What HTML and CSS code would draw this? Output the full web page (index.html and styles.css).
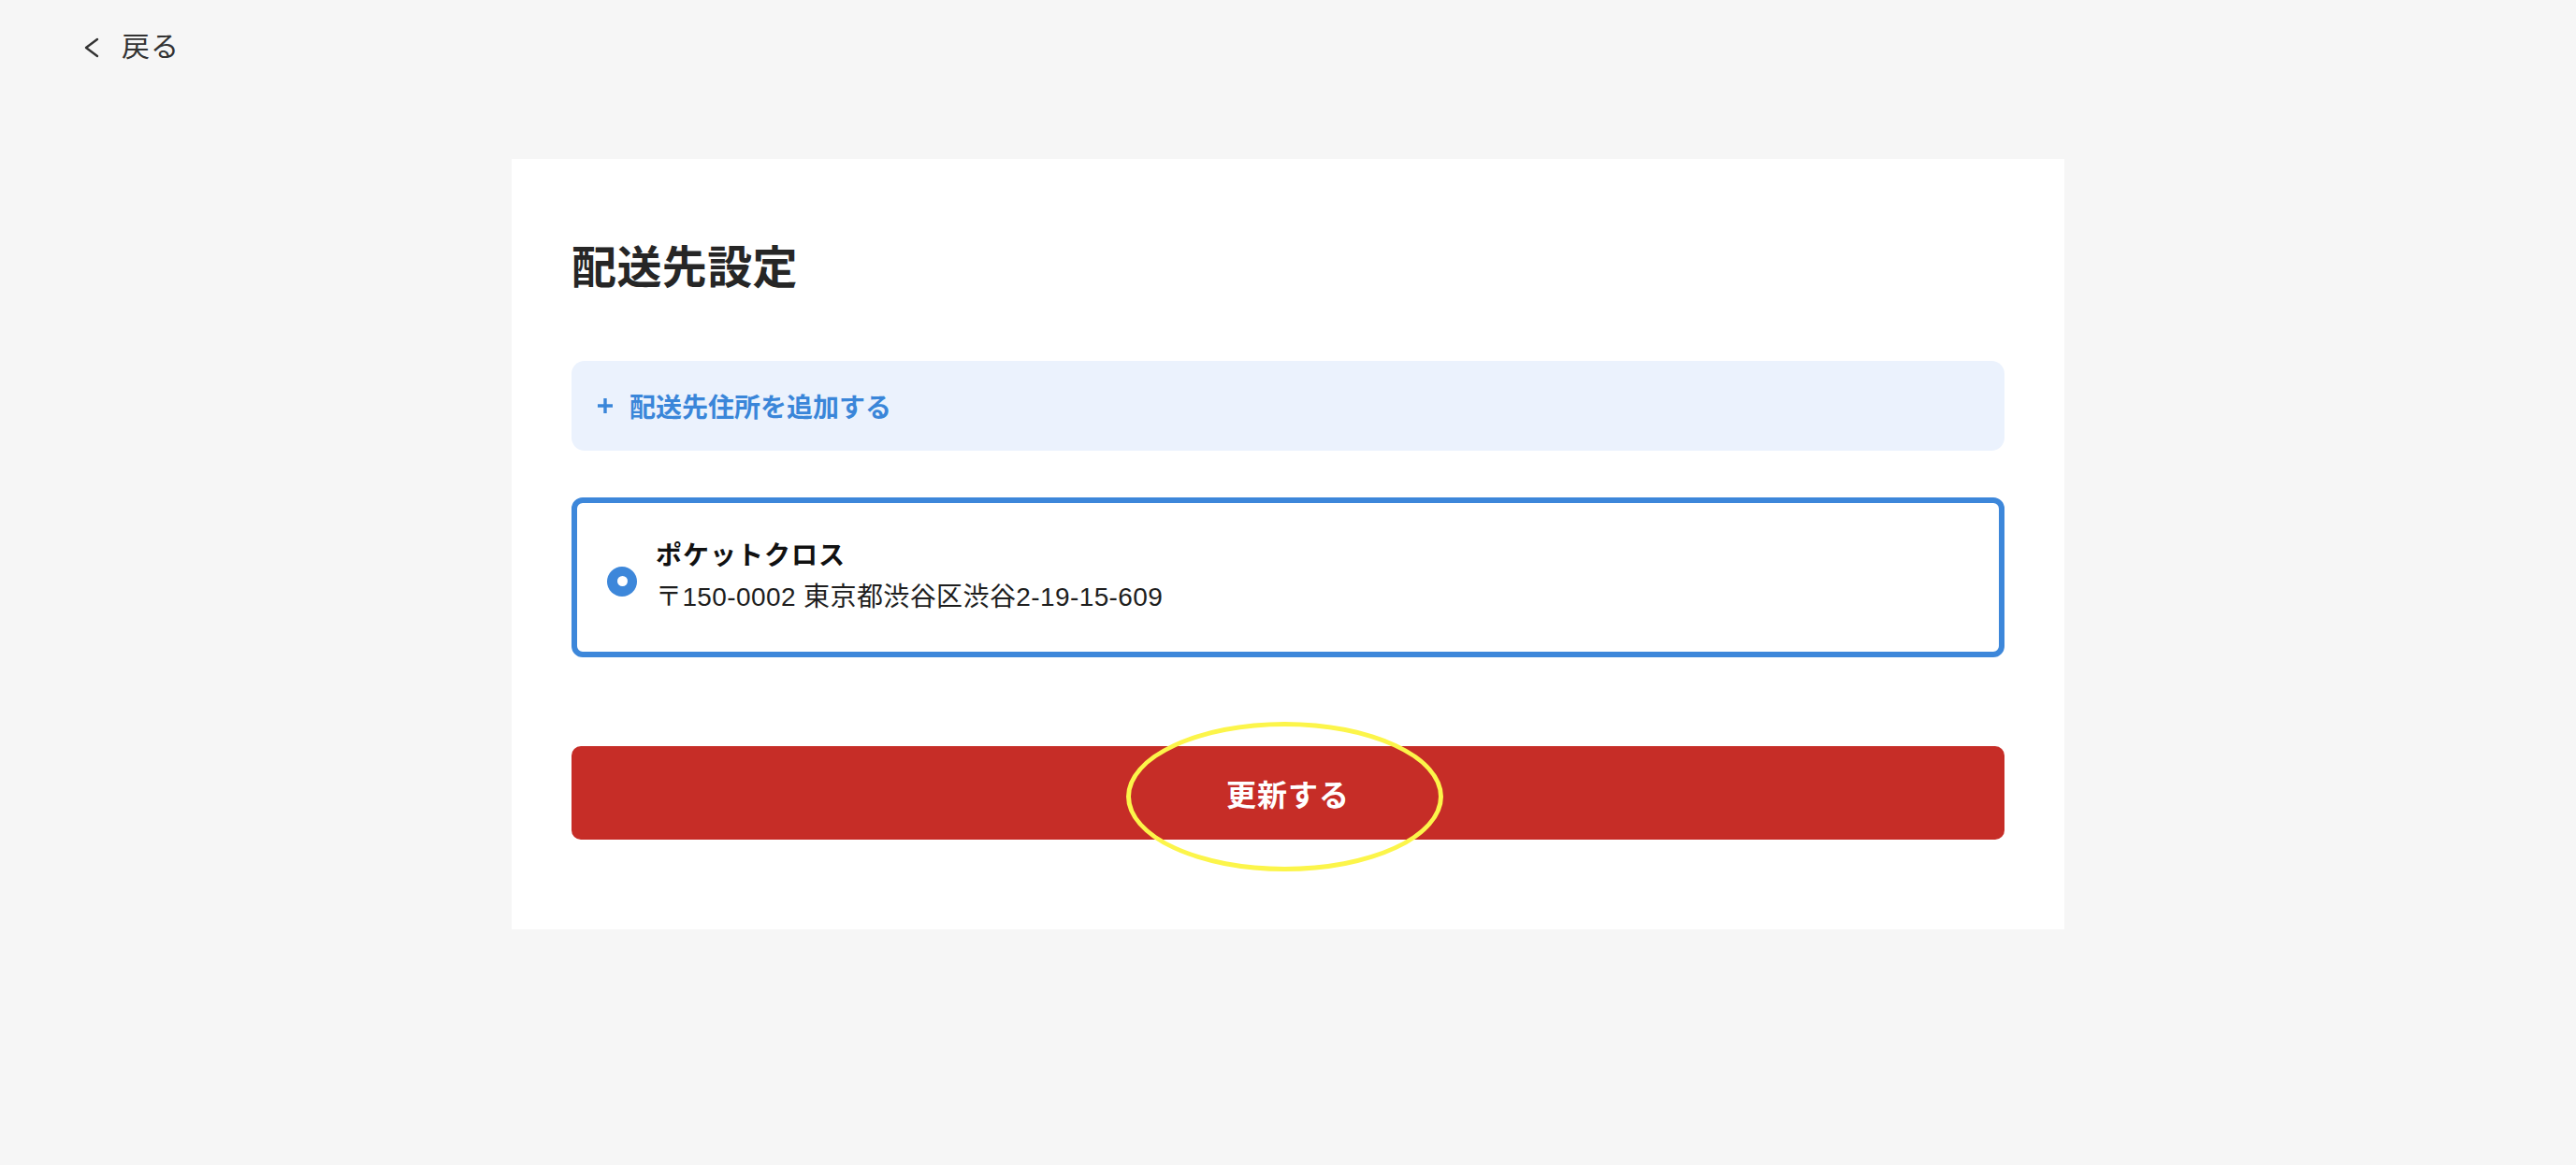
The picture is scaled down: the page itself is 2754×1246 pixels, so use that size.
FILE: index.html
```html
<!DOCTYPE html>
<html lang="ja">
<head>
<meta charset="utf-8">
<title>配送先設定</title>
<link rel="stylesheet" href="styles.css">
</head>
<body>
<header class="topbar">
  <a class="back" href="#">
    <svg class="back-icon" width="16" height="22" viewBox="0 0 16 22"><polyline points="14,2 2,11 14,20" fill="none" stroke="#333" stroke-width="2.4" stroke-linecap="round" stroke-linejoin="round"/></svg>
    <span class="back-label">戻る</span>
  </a>
</header>
<main class="card">
  <h1 class="title">配送先設定</h1>
  <button class="add" type="button">
    <svg class="add-icon" width="16" height="16" viewBox="0 0 16 16"><path d="M8 1.5v13M1.5 8h13" stroke="#3a86d9" stroke-width="3.4" stroke-linecap="square"/></svg>
    <span>配送先住所を追加する</span>
  </button>
  <label class="address">
    <span class="radio"><span class="radio-dot"></span></span>
    <span class="address-text">
      <span class="address-name">ポケットクロス</span>
      <span class="address-line">〒150-0002 東京都渋谷区渋谷2-19-15-609</span>
    </span>
  </label>
  <div class="submit-wrap">
    <button class="submit" type="button">更新する</button>
    <span class="highlight"></span>
  </div>
</main>
</body>
</html>
```
FILE: styles.css
```css
* { box-sizing: border-box; }
html, body { margin: 0; padding: 0; }
body {
  background: #f6f6f6;
  font-family: "Liberation Sans", "Noto Sans CJK JP", sans-serif;
  color: #222;
}
.topbar {
  padding: 30px 0 0 90px;
  height: 70px;
}
.back {
  display: inline-flex;
  align-items: center;
  gap: 24px;
  color: #333;
  text-decoration: none;
  font-size: 30px;
  line-height: 40px;
  letter-spacing: 1px;
}
.back-icon { display: block; margin-top: 2px; }
.card {
  width: 1660px;
  margin: 100px auto 0;
  background: #fff;
  padding: 83px 64px 96px;
}
.title {
  margin: 0;
  font-size: 48px;
  line-height: 68px;
  font-weight: 700;
  color: #262626;
  letter-spacing: 0.4px;
}
.add {
  margin-top: 65px;
  width: 100%;
  height: 96px;
  border: 0;
  border-radius: 14px;
  background: #ebf2fd;
  display: flex;
  align-items: center;
  gap: 18px;
  padding: 0 0 0 28px;
  font-family: inherit;
  font-size: 28px;
  font-weight: 700;
  color: #3a86d9;
  cursor: pointer;
}
.add-icon { display: block; }
.address {
  margin-top: 50px;
  height: 171px;
  border: 6px solid #3d87da;
  border-radius: 12px;
  display: flex;
  align-items: center;
  gap: 20px;
  padding: 0 0 0 32px;
}
.radio {
  width: 32px;
  height: 32px;
  border-radius: 50%;
  background: #3d87da;
  display: flex;
  align-items: center;
  justify-content: center;
  margin-top: 8px;
  flex: none;
}
.radio-dot {
  width: 11px;
  height: 11px;
  border-radius: 50%;
  background: #fff;
}
.address-text {
  display: flex;
  flex-direction: column;
  margin-top: -2px;
}
.address-name {
  font-size: 28px;
  line-height: 44px;
  font-weight: 700;
  color: #111;
  letter-spacing: 1px;
}
.address-line {
  font-size: 28px;
  line-height: 44px;
  color: #1e1e1e;
  letter-spacing: 0.4px;
}
.submit-wrap {
  position: relative;
  margin-top: 95px;
}
.submit {
  width: 100%;
  height: 100px;
  border: 0;
  border-radius: 10px;
  background: #c62d27;
  color: #fff;
  font-family: inherit;
  font-size: 32px;
  font-weight: 700;
  letter-spacing: 1px;
  cursor: pointer;
  display: block;
}
.highlight {
  position: absolute;
  left: calc(50% - 173px);
  top: -26px;
  width: 339px;
  height: 160px;
  border: 5px solid #fcf54a;
  border-radius: 50%;
  pointer-events: none;
}
```
